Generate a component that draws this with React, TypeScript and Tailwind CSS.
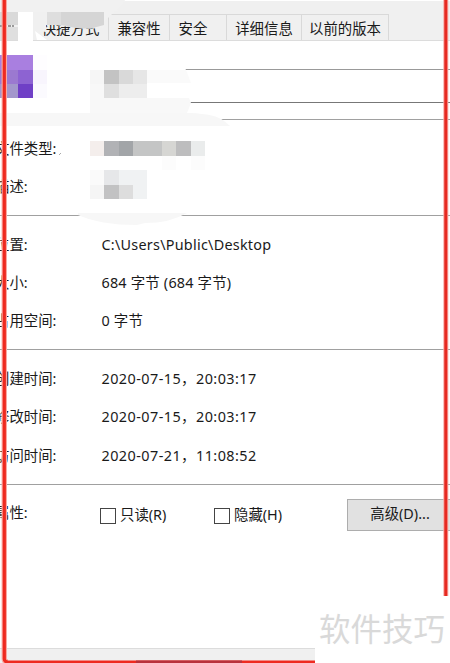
import clsx from "clsx";

type Field = { label: string; value?: string };

const tabs = [
  { label: "快捷方式", width: "w-[76px]" },
  { label: "兼容性", width: "w-[61px]" },
  { label: "安全", width: "w-[57px] pr-2.5" },
  { label: "详细信息", width: "w-[75px]" },
  { label: "以前的版本", width: "w-[87px]" },
];

const typeFields: Field[] = [{ label: "文件类型:" }, { label: "描述:" }];

const locationFields: Field[] = [
  { label: "位置:", value: "C:\\Users\\Public\\Desktop" },
  { label: "大小:", value: "684 字节 (684 字节)" },
  { label: "占用空间:", value: "0 字节" },
];

const timeFields: Field[] = [
  { label: "创建时间:", value: "2020-07-15，20:03:17" },
  { label: "修改时间:", value: "2020-07-15，20:03:17" },
  { label: "访问时间:", value: "2020-07-21，11:08:52" },
];

const valueSpacing: Record<string, string> = {
  "位置:": "tracking-[0.25px]",
  "大小:": "tracking-[0.2px]",
  "占用空间:": "tracking-[0.2px]",
};

// x, y, width, height, fill
const mosaic: [number, number, number, number, string][] = [
  [0, 12, 18, 13, "#d9d9d9"],
  [0, 27, 18, 13, "#dfdfdf"],
  [18, 12, 15, 29, "#ffffff"],
  [0, 55, 33, 15, "#a97fe0"],
  [0, 70, 18, 14, "#9b79d0"],
  [18, 70, 15, 14, "#8d63d2"],
  [0, 84, 18, 14, "#a397cc"],
  [18, 84, 15, 14, "#6f3fc6"],
  [33, 55, 14, 15, "#fefdff"],
  [33, 70, 14, 14, "#f8f5fd"],
  [33, 84, 14, 14, "#fbfafe"],
  [90, 70, 14, 14, "#f6f6f6"],
  [104, 70, 15, 14, "#c3c3c3"],
  [119, 70, 14, 14, "#d9d9d9"],
  [133, 70, 14, 14, "#e6e6e6"],
  [90, 84, 14, 14, "#f8f8f8"],
  [104, 84, 15, 14, "#dfdfdf"],
  [119, 84, 28, 14, "#ededed"],
  [90, 141, 14, 15, "#f4eeec"],
  [104, 141, 15, 15, "#b1b2b5"],
  [119, 141, 14, 15, "#a2a5a8"],
  [133, 141, 29, 15, "#c4c5c5"],
  [162, 141, 14, 15, "#d6d6d3"],
  [176, 141, 15, 15, "#bdbdbe"],
  [191, 141, 14, 15, "#eaecec"],
  [162, 156, 14, 14, "#fcfcfc"],
  [191, 156, 14, 14, "#fcfcfc"],
  [90, 170, 14, 15, "#fafafa"],
  [104, 170, 15, 15, "#e6e7e9"],
  [119, 170, 28, 15, "#f0f2f3"],
  [90, 185, 14, 14, "#f5f5f5"],
  [104, 185, 15, 14, "#c2c2c3"],
  [119, 185, 14, 14, "#dddddd"],
  [133, 185, 14, 14, "#f0f2f3"],
];

function FieldRow({ label, value }: Field) {
  return (
    <div className="flex h-[38.4px] items-center">
      <div className="w-[106.5px] shrink-0">{label}</div>
      {value && <div className={clsx("whitespace-nowrap", valueSpacing[label] ?? "tracking-[0.45px]")}>{value}</div>}
    </div>
  );
}

function Section({ fields }: { fields: Field[] }) {
  return (
    <section className="border-t border-[#a0a0a0] pb-[8.6px] pt-[9.6px]">
      {fields.map((field) => (
        <FieldRow key={field.label} {...field} />
      ))}
    </section>
  );
}

function CheckOption({ label }: { label: string }) {
  return (
    <label className="flex w-[114px] items-center gap-1">
      <span className="size-4 border border-[#444] bg-white" />
      <span className="text-[14.4px]">{label}</span>
    </label>
  );
}

function Smudges() {
  return (
    <svg className="absolute left-0 top-0" width="450" height="240" viewBox="0 0 450 240">
      <path d="M0 0H125Q122 8 113 13L104 22V27Q92 30 78 28L46 24V32L33 30V12H0Z" fill="#f1f1f1" />
      <path d="M33 12H47V25L44 25L42 33L47 40H33Z" fill="#f0f0f0" />
      <path d="M35 31L47 40H37Z" fill="#fff" />
      <path d="M47 12H61V25H47Z" fill="#dedede" />
      <path d="M61 12H104V25Q90 30 76 28L61 25Z" fill="#d5d5d5" />
      <path d="M90 65H184L191 83H147V70H90Z" fill="#fff" />
      <path d="M147 70H186L191 83H147Z" fill="#fafafa" />
      <path d="M147 83H191V98H147Z" fill="#fff" />
      <path d="M90 98H189L191 103L187 113H90Z" fill="#f8f8f8" />
      <path d="M0 113H190Q216 114 224 121L230 126H0Z" fill="#f7f7f7" />
      <path d="M78 213H187Q170 223 145 223L137 225Q100 225 78 215Z" fill="#f7f7f7" />
      {mosaic.map(([x, y, width, height, fill]) => (
        <rect key={`${x}-${y}`} x={x} y={y} width={width} height={height} fill={fill} />
      ))}
      <path d="M0 26H14" stroke="#444" strokeDasharray="3 1" />
      <path d="M59 155L61 153" stroke="#aaa" />
    </svg>
  );
}

function RedFrame() {
  return (
    <svg className="absolute left-0 top-0" width="450" height="663" viewBox="0 0 450 663">
      <path d="M4.3 0V659Q4.3 662 8 662" fill="none" stroke="#f9a8a2" strokeWidth="5.4" />
      <path d="M4.3 0V659Q4.3 662 8 662H315" fill="none" stroke="#ee2a20" strokeWidth="3.2" />
      <path d="M136 661.7H242" stroke="#b8323c" strokeWidth="2.4" />
      <path d="M445.8 0V596" stroke="#f9aaa5" strokeWidth="5" />
      <path d="M445.8 0V596" stroke="#e62a22" strokeWidth="3" />
    </svg>
  );
}

export default function App() {
  return (
    <div className="relative flex h-[663px] w-[450px] flex-col overflow-hidden bg-white font-['Noto_Sans','Noto_Sans_CJK_SC',sans-serif] text-[14.4px] leading-none text-[#1a1a1a]">
      <header className="flex h-[41px] shrink-0 items-end border-b border-t border-b-[#dcdcdc] border-t-white bg-[#f0f0f0] pl-[33px]">
        {tabs.map((tab) => (
          <div
            key={tab.label}
            className={clsx(
              "flex h-[26px] shrink-0 items-center justify-center border-r border-t border-[#d9d9d9] pt-1",
              tab.width
            )}
          >
            <span className="whitespace-nowrap">{tab.label}</span>
          </div>
        ))}
      </header>

      <main className="-ml-[5px] flex grow flex-col">
        <div className="flex h-[78px] shrink-0 items-end pb-4">
          <div className="ml-[106px] h-[34px] w-[360px] shrink-0 border border-b-[#777] border-t-[#999]" />
        </div>

        <Section fields={typeFields} />
        <Section fields={locationFields} />
        <Section fields={timeFields} />

        <section className="flex grow items-start border-t border-[#a0a0a0]">
          <div className="mt-[21px] w-[105px] shrink-0">属性:</div>
          <div className="mt-[23px] flex w-[247px] shrink-0">
            <CheckOption label="只读(R)" />
            <CheckOption label="隐藏(H)" />
          </div>
          <button className="mt-3.5 h-8 w-[120px] shrink-0 border border-[#adadad] bg-[#e1e1e1] pr-3.5">
            高级(D)...
          </button>
        </section>
      </main>

      <footer className="h-[15px] shrink-0 border-t border-[#dcdcdc] bg-[#f0f0f0]" />

      <Smudges />
      <RedFrame />
      <div className="absolute bottom-0 right-0 flex h-[67px] w-[135px] items-center whitespace-nowrap bg-white pb-1 pl-1 font-['Noto_Sans_CJK_SC',sans-serif] text-[31.5px] font-normal text-[#d9d9d9]">
        软件技巧
      </div>
    </div>
  );
}
